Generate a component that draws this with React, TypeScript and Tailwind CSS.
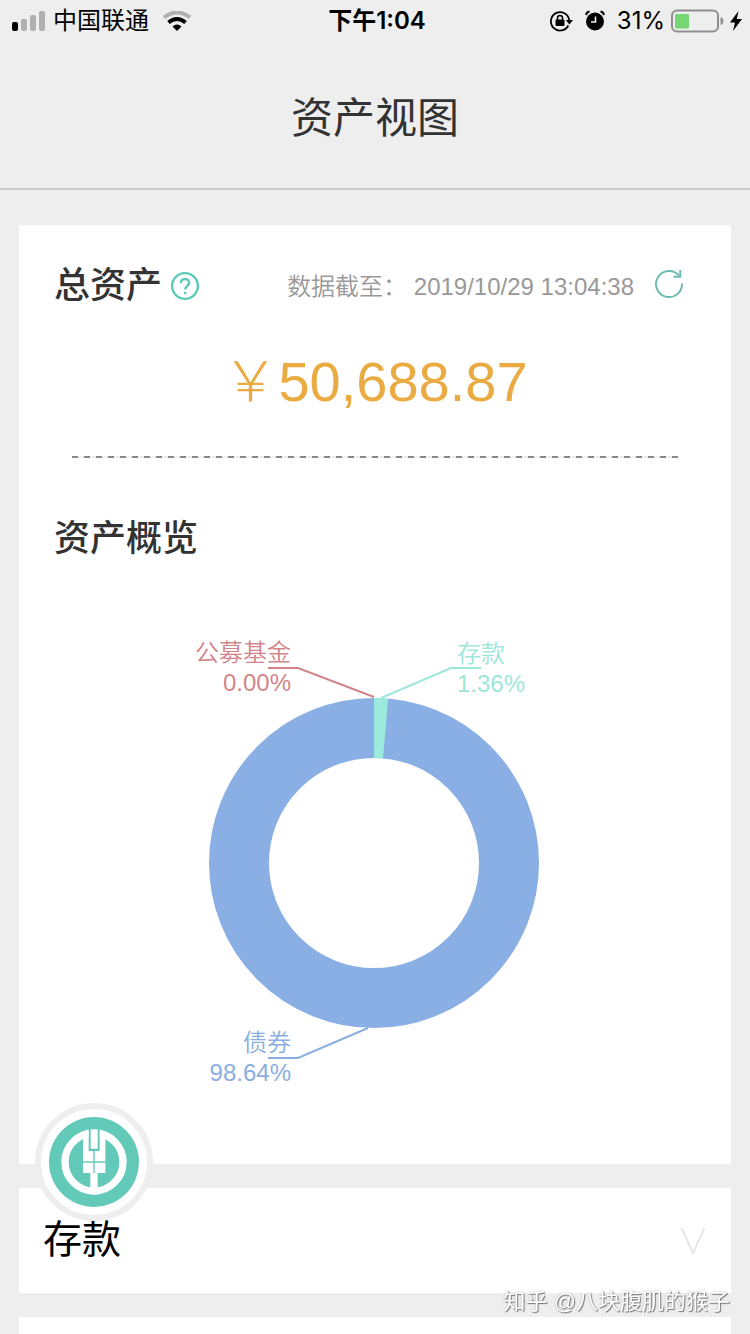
import React, { useState } from 'react';

interface Slice {
  name: string;
  percent: string;
  color: string;
  anchor: 'start' | 'end';
  x: number;
  y: number;
  line: string;
}

const SLICES: Slice[] = [
  { name: '公募基金', percent: '0.00%', color: '#d1858a', anchor: 'end', x: 105, y: 62, line: '82,69 112,69 188,98' },
  { name: '存款', percent: '1.36%', color: '#9fe6da', anchor: 'start', x: 271, y: 63, line: '295,69 265,69 195,99' },
  { name: '债券', percent: '98.64%', color: '#8aaee0', anchor: 'end', x: 105, y: 452, line: '82,459 112,459 182,429' },
];

const StatusBar: React.FC = () => (
  <div className="grid h-10 grid-cols-[1fr_auto_1fr] items-center pt-0.5 pl-3 pr-2 font-['Inter','Noto_Sans_CJK_SC',sans-serif] text-2xl leading-none text-black">
    <div className="flex items-center gap-2">
      <svg className="h-5 w-[33px]" viewBox="0 0 33 20">
        <rect x="0" y="11" width="6" height="9" rx="2" />
        <rect x="9" y="8" width="6" height="12" rx="2" fill="#b0b0b0" />
        <rect x="18" y="4" width="6" height="16" rx="2" fill="#b0b0b0" />
        <rect x="27" y="0" width="6" height="20" rx="2" fill="#b0b0b0" />
      </svg>
      <span>中国联通</span>
      <svg className="ml-1.5 h-5 w-7" viewBox="0 0 28 20" fill="none">
        <path d="M1 6.500Q14-3.500 27 6.500" stroke="#b0b0b0" strokeWidth="4" />
        <path d="M5.500 11.500Q14 4.500 22.500 11.500" stroke="#000" strokeWidth="4" />
        <path d="M9.500 15.500Q14 11.500 18.500 15.500L14 20Z" fill="#000" />
      </svg>
    </div>
    <span className="font-semibold">下午1:04</span>
    <div className="flex items-center justify-end">
      <svg className="h-6 w-6" viewBox="0 0 24 24" fill="none">
        <path d="M19.300 16.500A9.200 9.200 0 1 1 20.200 11" stroke="#000" strokeWidth="1.800" />
        <path d="M16.800 11H24L20.400 15.500Z" fill="#000" />
        <rect x="6.500" y="10.500" width="9" height="6.500" rx="1" fill="#000" />
        <path d="M8.500 11V9a2.500 2.500 0 0 1 5 0v2" stroke="#000" strokeWidth="1.600" />
      </svg>
      <svg className="ml-3 h-6 w-5" viewBox="0 0 20 24" fill="none">
        <circle cx="10" cy="12.500" r="9" fill="#000" />
        <path d="M1 6Q1.500 3 4.500 2.500M19 6Q18.500 3 15.500 2.500" stroke="#000" strokeWidth="1.800" />
        <path d="M10.500 7.500V13H6" stroke="#eee" strokeWidth="1.600" />
      </svg>
      <span className="ml-3">31%</span>
      <svg className="ml-1.5 h-6 w-[53px]" viewBox="0 0 53 24" fill="none">
        <rect x="1" y="1.500" width="46" height="21" rx="5" stroke="#8f8f8f" strokeWidth="2" />
        <rect x="4" y="5" width="14" height="14.500" rx="1" fill="#76d672" />
        <path d="M49.500 8Q52.500 9 52.500 12T49.500 16Z" fill="#8f8f8f" />
      </svg>
      <svg className="ml-1.5 h-5 w-3" viewBox="0 0 12 20">
        <path d="M8.500 0L0 11.500H5L3 20L12 8H6.800Z" />
      </svg>
    </div>
  </div>
);

const AssetChart: React.FC = () => (
  <svg className="mx-auto block h-[500px] w-[378px]" viewBox="0 0 378 500" role="img" aria-label="资产概览">
    <circle cx="188" cy="264" r="135" fill="none" stroke="#8aafe5" strokeWidth="60" />
    <path d="M188 99A165 165 0 0 1 202.100 99.600L197 159.400A105 105 0 0 0 188 159Z" fill="#9ceade" />
    {SLICES.map((slice) => (
      <g key={slice.name} fill={slice.color} fontSize="24" textAnchor={slice.anchor}>
        <polyline points={slice.line} fill="none" stroke={slice.color} strokeWidth="2" />
        <text x={slice.x} y={slice.y}>{slice.name}</text>
        <text x={slice.x} y={slice.y + 30}>{slice.percent}</text>
      </g>
    ))}
  </svg>
);

const BankLogo: React.FC = () => (
  <svg className="size-[90px]" viewBox="-45 -32 270 270">
    <circle cx="90" cy="103" r="135" fill="#63cab9" />
    <circle cx="90" cy="103" r="87" fill="none" stroke="#fff" strokeWidth="22" />
    {/* clear the ring behind the ear of wheat */}
    <path d="M74 0H107V70H74Z" fill="#63cab9" />
    <path d="M57 12H74V70H107V12H124V136H101V200H79V136H57Z" fill="#fff" />
    <path d="M80 5H101V63H80Z" fill="#fff" />
    <path d="M90 70V136M57 103H124" stroke="#63cab9" strokeWidth="4" />
  </svg>
);

const App: React.FC = () => {
  const [open, setOpen] = useState(false);

  return (
    <div className="flex min-h-screen flex-col bg-[#eeeeee] font-['Liberation_Sans','Noto_Sans_CJK_SC',sans-serif] text-[#333333]">
      <StatusBar />
      <header className="flex h-[150px] items-center justify-center border-b-2 border-[#cccccc] pt-2.5">
        <h1 className="text-[42px] leading-none">资产视图</h1>
      </header>

      <main className="mt-[35px] flex flex-1 flex-col gap-6 px-[19px]">
        <section className="bg-white px-[35px] pt-[33px] pb-[65px]">
          <div className="flex items-center">
            <h2 className="text-4xl font-medium leading-14">总资产</h2>
            <button type="button" aria-label="说明" className="ml-2">
              <svg className="size-[30px]" viewBox="0 0 30 30" fill="none" stroke="#5ecab8" strokeWidth="2.400">
                <circle cx="15" cy="15" r="12.900" />
                <path d="M10.800 12.300C10.800 6.500 19.200 6.700 19.200 11.800C19.200 14.700 15.200 14.900 15.200 18.600" />
                <path d="M15.200 20.800V23.200" />
              </svg>
            </button>
            <p className="ml-auto whitespace-pre pt-0.5 text-2xl font-[350] text-[#999999]">数据截至： 2019/10/29 13:04:38</p>
            <button type="button" aria-label="刷新" className="ml-5 mr-3">
              <svg className="h-[34px] w-[30px]" viewBox="0 0 30 34" fill="none" stroke="#6dbbb0" strokeWidth="2">
                <path d="M28 14.500A13 13 0 1 1 24.800 6.500" />
                <path d="M26.300 1V7.800H19.500" />
              </svg>
            </button>
          </div>

          <p className="mt-8 text-center text-[56px] leading-[72px] text-[#eaac42]">
            <span className="font-light">￥</span>50,688.87
          </p>
          <hr className="mx-[18px] mt-[38px] h-0.5 border-0 bg-[repeating-linear-gradient(90deg,#888888_0_6px,#eeeeee_6px_12px)]" />

          <h2 className="mt-[53px] text-4xl font-medium leading-14">资产概览</h2>
          <div className="mt-8 font-[350]">
            <AssetChart />
          </div>
        </section>

        <section className="bg-white">
          <button
            type="button"
            aria-expanded={open}
            onClick={() => setOpen(!open)}
            className="flex h-[105px] w-full items-center justify-between pl-6 pr-[25px] text-[39px] text-black"
          >
            存款
            <svg className="h-7 w-[26px]" viewBox="0 0 26 28" fill="none" stroke="#e6e6e6" strokeWidth="2">
              <path d="M1.500 1L13 26L24.500 1" />
            </svg>
          </button>
          {open && <p className="px-6 pb-6 text-2xl text-[#999999]">1.36%</p>}
        </section>

        <section className="flex-1 bg-white" />
      </main>

      <button
        type="button"
        aria-label="首页"
        className="fixed bottom-[113px] left-[35px] flex size-[118px] items-center justify-center rounded-full border-6 border-[#eeeeee] bg-white"
      >
        <BankLogo />
      </button>
      <p className="pointer-events-none fixed right-5 bottom-4 text-[22px] leading-8 text-white [text-shadow:1px_1px_1px_#777777,0_0_2px_#aaaaaa]">
        知乎 @八块腹肌的猴子
      </p>
    </div>
  );
};

export default App;
